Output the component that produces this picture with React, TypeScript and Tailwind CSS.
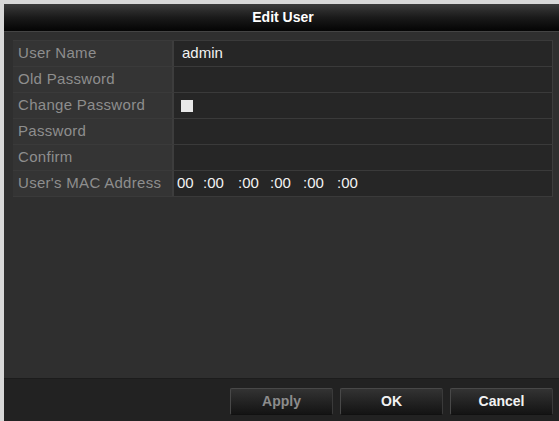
import React from 'react';

const rows: { label: string; value?: React.ReactNode }[] = [
  { label: 'User Name', value: <span className="text-[#f2f2f2] ml-[6px]">admin</span> },
  { label: 'Old Password' },
  { label: 'Change Password', value: <span className="block w-[12px] h-[12px] bg-[#e8e8e8] ml-[5px]" /> },
  { label: 'Password' },
  { label: 'Confirm' },
  {
    label: "User's MAC Address",
    value: (
      <span className="text-[#f2f2f2] flex ml-[1px]">
        <span className="w-[26px]">00</span>
        <span className="w-[35px]">:00</span>
        <span className="w-[32px]">:00</span>
        <span className="w-[33px]">:00</span>
        <span className="w-[34px]">:00</span>
        <span>:00</span>
      </span>
    ),
  },
];

const buttons = [
  { label: 'Apply', active: false },
  { label: 'OK', active: true },
  { label: 'Cancel', active: true },
];

export default function App() {
  return (
    <div
      className="w-[559px] h-[421px] bg-[#d8d8d8] pt-[4px] pl-[4px] overflow-hidden"
      style={{ fontFamily: '"Liberation Sans", Arial, sans-serif' }}
    >
      <div className="w-full h-full flex flex-col bg-[#2f2f2f]">
        {/* title bar */}
        <div className="h-[28px] shrink-0 flex items-center justify-center bg-gradient-to-b from-[#3c3c3c] via-[#1a1a1a] to-[#050505] border-b border-[#444]">
          <span className="text-white font-bold text-[14px] ml-[3px]">Edit User</span>
        </div>

        {/* form rows */}
        <div className="flex-1 pt-[8px] pl-[9px] pr-[6px]">
          <div className="border-t border-[#3a3a3a]">
            {rows.map((r) => (
              <div key={r.label} className="flex h-[26px] border-b border-[#3a3a3a]">
                <div className="w-[161px] shrink-0 bg-[#343434] border-r-2 border-[#3d3d3d] flex items-center pl-[5px] text-[15px] tracking-[0.3px] text-[#8e8e8e]">
                  {r.label}
                </div>
                <div className="flex-1 bg-[#262626] border-r border-[#3d3d3d] flex items-center pl-[2px] text-[15px]">
                  {r.value}
                </div>
              </div>
            ))}
          </div>
        </div>

        {/* button bar */}
        <div className="h-[43px] shrink-0 bg-[#222222] border-t border-[#1c1c1c] flex items-start justify-end gap-[7px] pt-[9px] pr-[6px]">
          {buttons.map((b) => (
            <div
              key={b.label}
              className={`w-[103px] h-[27px] flex items-center justify-center text-[14px] font-bold rounded-[2px] border-t border-l border-[#484848] border-r border-r-[#3a3a3a] border-b border-b-[#111] bg-gradient-to-b from-[#333] to-[#141414] ${
                b.active ? 'text-[#f2f2f2]' : 'text-[#8c8c8c]'
              }`}
            >
              {b.label}
            </div>
          ))}
        </div>
      </div>
    </div>
  );
}
